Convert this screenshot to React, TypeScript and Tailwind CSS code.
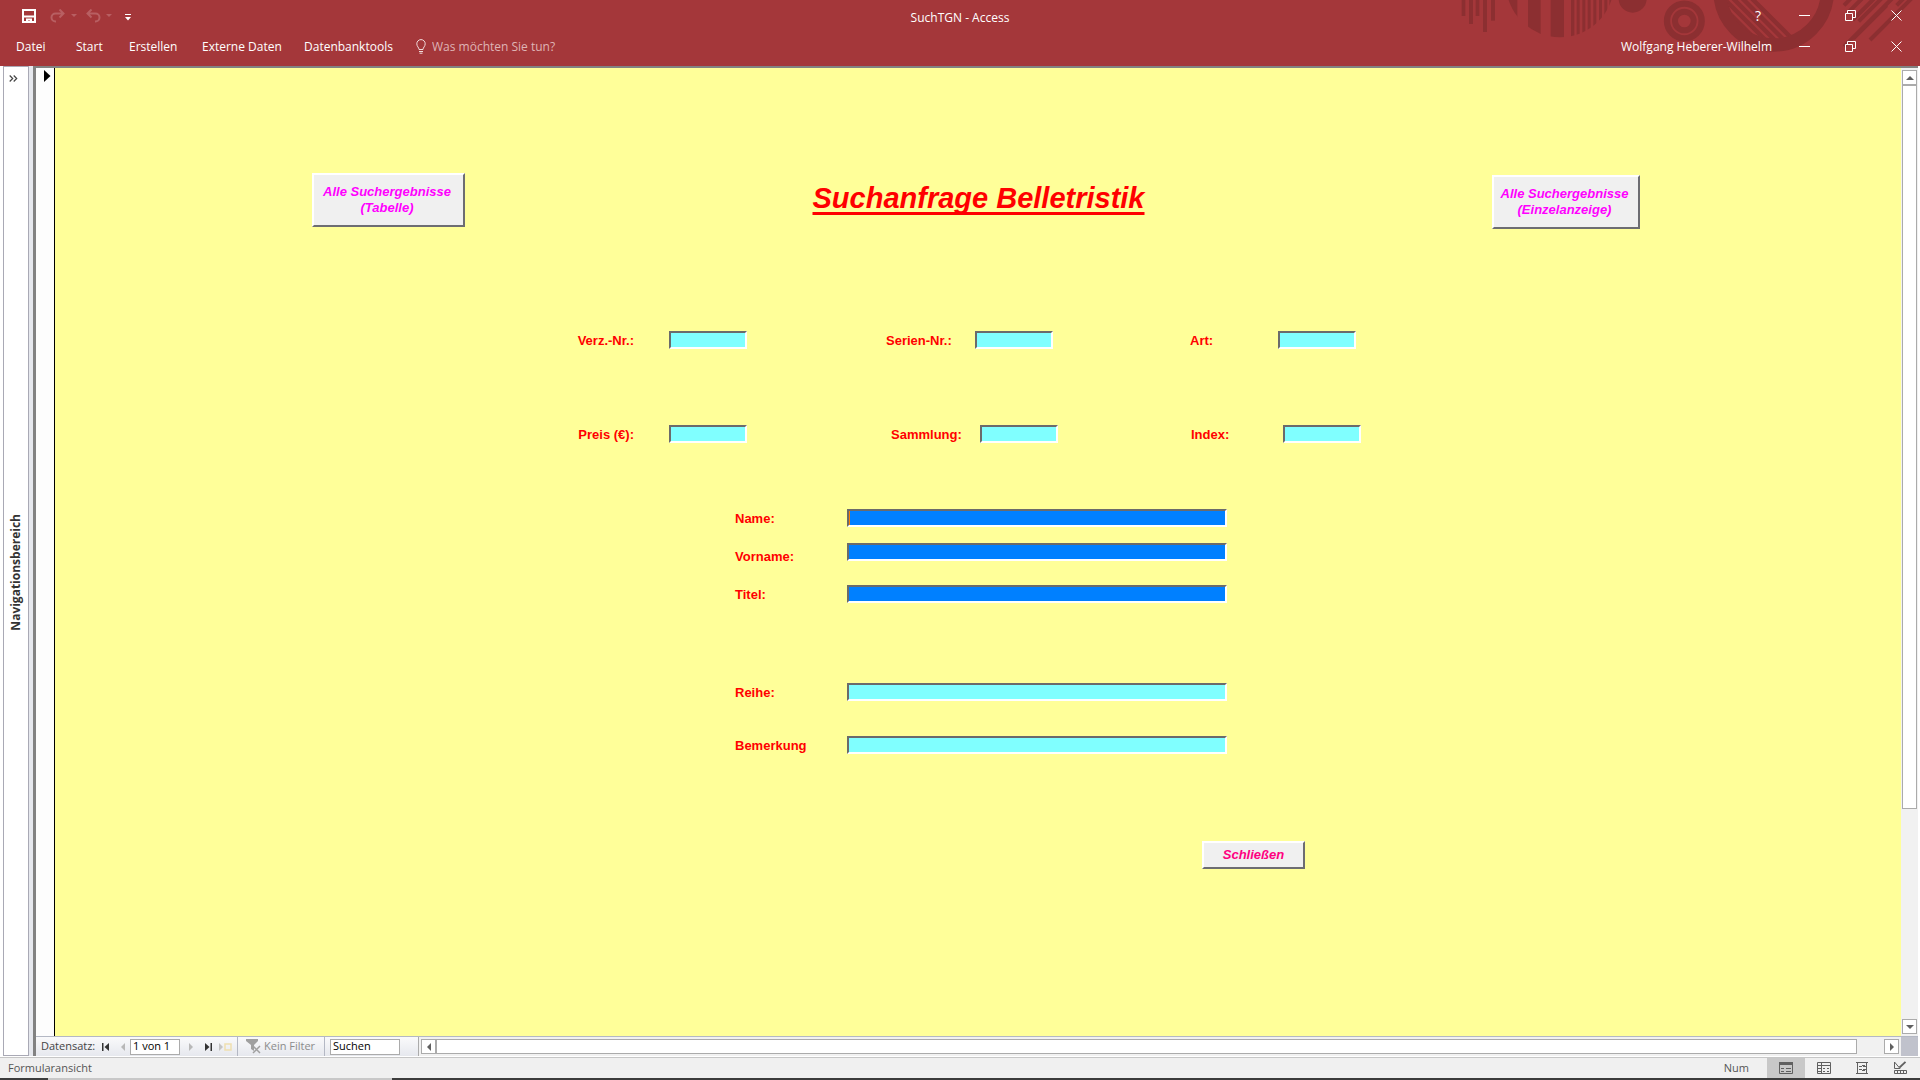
import React from "react";

const cyan = "bg-[#80ffff]";
const blue = "bg-[#0080ff]";

function Field({ id, color, wide }: { id: string; color: string; wide?: boolean }) {
  return (
    <input
      id={id}
      type="text"
      className={`h-[18px] rounded-none border-2 border-t-[#6b6b6b] border-l-[#6b6b6b] border-r-white border-b-white px-0.5 text-[13px] text-black outline-none ${color} ${wide ? "w-[380px]" : "w-[78px]"}`}
    />
  );
}

function Label({ id, text, right }: { id: string; text: string; right?: boolean }) {
  return (
    <label
      htmlFor={id}
      className={`pt-px text-[13px] leading-[18px] font-bold whitespace-nowrap text-[#ff0000] ${right ? "w-[61px] text-right" : ""}`}
    >
      {text}
    </label>
  );
}

function WideRow({ id, text, color, low }: { id: string; text: string; color: string; low?: boolean }) {
  return (
    <div className={`grid grid-cols-[112px_380px] ${low ? "h-[23px]" : "h-[18px]"}`}>
      <div className={`flex ${low ? "items-end" : "items-start"}`}>
        <Label id={id} text={text} />
      </div>
      <Field id={id} color={color} wide />
    </div>
  );
}

function FormButton({ children, className }: { children: React.ReactNode; className: string }) {
  return (
    <button
      type="button"
      className={`flex items-center justify-center border-2 border-t-white border-l-white border-r-[#6d6d72] border-b-[#6d6d72] bg-[#f0f0f0] text-center text-[13px] leading-4 font-bold italic ${className}`}
    >
      {children}
    </button>
  );
}

function HeaderArt() {
  return (
    <svg className="absolute top-0 right-0 h-[66px] w-[480px]" viewBox="0 0 1440 198" aria-hidden="true">
      <defs>
        <clipPath id="stripedDisc">
          <circle cx="360" cy="-50" r="162" />
        </clipPath>
        <clipPath id="ringHole">
          <circle cx="1001" cy="-26" r="142" />
        </clipPath>
      </defs>
      <g fill="#8c2f31">
        <rect x="65" y="0" width="11" height="48" />
        <rect x="87" y="0" width="12" height="72" />
        <rect x="107" y="0" width="11" height="48" />
        <rect x="129" y="0" width="12" height="96" />
        <rect x="153" y="0" width="12" height="62" />
        <g clipPath="url(#stripedDisc)">
          <rect x="190" y="0" width="42" height="120" />
          <rect x="264" y="0" width="38" height="120" />
          <rect x="332" y="0" width="40" height="120" />
          <rect x="393" y="0" width="10" height="120" />
          <rect x="410" y="0" width="9" height="120" />
          <rect x="427" y="0" width="9" height="120" />
          <rect x="443" y="0" width="9" height="120" />
          <rect x="460" y="0" width="9" height="120" />
          <rect x="477" y="0" width="9" height="120" />
          <rect x="493" y="0" width="9" height="120" />
          <rect x="508" y="0" width="9" height="120" />
        </g>
        <circle cx="578" cy="-4" r="42" />
      </g>
      <g fill="none" stroke="#8c2f31">
        <circle cx="733" cy="63" r="52" strokeWidth="19" />
        <circle cx="733" cy="63" r="28" strokeWidth="18" />
        <circle cx="1001" cy="-26" r="161" strokeWidth="40" />
        <g clipPath="url(#ringHole)" strokeWidth="13">
          <path d="M840 40L980 180M840 12L1000 172M848 -8L1020 164M872 -12L1040 156M900 -12L1060 148M928 -12L1080 140" />
        </g>
        <g strokeWidth="12">
          <path d="M1212 16L1232 -4M1224 38L1270 -8M1238 60L1306 -8M1256 64L1328 -8M1212 140L1362 -10M1240 116L1340 16M1290 120L1420 -10M1390 -4L1370 16" />
        </g>
      </g>
    </svg>
  );
}

function WindowControls() {
  const btn = "flex h-6 w-[46px] items-center justify-center";
  return (
    <div className="flex pr-px text-white">
      <button type="button" aria-label="Minimieren" className={btn}>
        <svg width="11" height="11" viewBox="0 0 11 11" stroke="currentColor"><path d="M0 5.5H11" /></svg>
      </button>
      <button type="button" aria-label="Wiederherstellen" className={btn}>
        <svg width="11" height="11" viewBox="0 0 11 11" fill="none" stroke="currentColor"><path d="M.5 3.5H7.5V10.500H.5ZM2.500 3.500V.5H10.500V7.500H7.500" /></svg>
      </button>
      <button type="button" aria-label="Schließen" className={btn}>
        <svg width="11" height="11" viewBox="0 0 11 11" stroke="currentColor"><path d="M.5 .5L10.500 10.500M10.500 .5L.5 10.500" /></svg>
      </button>
    </div>
  );
}

function Caret() {
  return (
    <svg width="6" height="4" viewBox="0 0 6 4" fill="#b85f62" aria-hidden="true"><path d="M0 0H6L3 3Z" /></svg>
  );
}

function Header() {
  return (
    <header className="relative flex h-[66px] shrink-0 flex-col overflow-hidden bg-[#a4373a] text-xs text-white">
      <HeaderArt />
      <div className="relative grid h-[31px] grid-cols-[1fr_auto_1fr] items-center">
        <div className="flex items-center pl-[22px]">
          <button type="button" aria-label="Speichern">
            <svg width="14" height="14" viewBox="0 0 14 14" fill="none" stroke="white" strokeWidth="2"><path d="M1 1H13V13H1ZM1 7.500H13" /><path d="M4 9.500H10V14H8V11.500H6V14H4Z" fill="white" stroke="none" /></svg>
          </button>
          <button type="button" aria-label="Wiederholen" className="ml-[14px] flex items-center gap-[6px]">
            <svg width="15" height="14" viewBox="0 0 15 14" fill="none" stroke="#b85f62" strokeWidth="2"><path d="M9.500 .5L13.500 4.500L9.500 8.500M13 4.500H5.500A4 4 0 0 0 5.500 12.500H6" /></svg>
            <Caret />
          </button>
          <button type="button" aria-label="Rückgängig" className="ml-[9px] flex items-center gap-[5px]">
            <svg width="15" height="14" viewBox="0 0 15 14" fill="none" stroke="#b85f62" strokeWidth="2"><path d="M5.500 .5L1.500 4.500L5.500 8.500M2 4.500H9.500A4 4 0 0 1 9.500 12.500H9" /></svg>
            <Caret />
          </button>
          <button type="button" aria-label="Symbolleiste anpassen" className="ml-[13px] pt-1">
            <svg width="6" height="7" viewBox="0 0 6 7" fill="white"><path d="M0 0H6V1H0ZM0 3H6L3 6.500Z" /></svg>
          </button>
        </div>
        <h1 className="pt-1 text-[12px]">SuchTGN - Access</h1>
        <div className="flex items-center justify-end">
          <button type="button" aria-label="Hilfe" className="mr-[17px] w-[12px] text-sm leading-4">?</button>
          <WindowControls />
        </div>
      </div>
      <div className="relative flex h-[31px] items-center">
        <nav className="flex items-center pl-4">
          <button type="button" className="w-[60px] text-left">Datei</button>
          <button type="button" className="w-[53px] text-left">Start</button>
          <button type="button" className="w-[73px] text-left">Erstellen</button>
          <button type="button" className="w-[102px] text-left whitespace-nowrap">Externe Daten</button>
          <button type="button" className="w-[112px] text-left">Datenbanktools</button>
        </nav>
        <label className="flex items-center gap-[6px]">
          <svg width="10" height="15" viewBox="0 0 10 15" fill="none" stroke="#f0dcdc" aria-hidden="true"><path d="M3 10.500C3 8.500 .8 7.500 .8 4.800A4.200 4.200 0 0 1 9.200 4.800C9.200 7.500 7 8.500 7 10.500ZM3 12.500H7M3.500 14.200H6.500" /></svg>
          <input type="text" placeholder="Was möchten Sie tun?" className="w-[160px] bg-transparent outline-none placeholder:text-[#dfb4b5]" />
        </label>
        <div className="ml-auto flex items-center">
          <span className="mr-[9px]">Wolfgang Heberer-Wilhelm</span>
          <WindowControls />
        </div>
      </div>
    </header>
  );
}

function Arrow({ d }: { d: string }) {
  return <svg width="8" height="8" viewBox="0 0 8 8" fill="#606060" aria-hidden="true"><path d={d} /></svg>;
}

const scrollBtn = "flex size-[15px] shrink-0 items-center justify-center border border-[#ababab] bg-white";

function SearchForm() {
  return (
    <form className="flex min-w-0 flex-1 flex-col bg-[#ffff99] pt-[105px] font-['Liberation_Sans',Arial,sans-serif]">
      <div className="flex items-start justify-between pr-[261px] pl-[257px]">
        <FormButton className="h-[54px] w-[153px] pr-[3px] text-[#ff00ff]">
          <span>Alle Suchergebnisse<br />(Tabelle)</span>
        </FormButton>
        <h2 className="pt-2 text-[29px] leading-[34px] font-bold whitespace-nowrap text-[#ff0000] italic underline decoration-[3px] underline-offset-4 [text-decoration-skip-ink:none]">
          Suchanfrage Belletristik
        </h2>
        <FormButton className="mt-[2px] h-[54px] w-[148px] pr-[3px] text-[#ff00ff]">
          <span>Alle Suchergebnisse<br />(Einzelanzeige)</span>
        </FormButton>
      </div>
      <div className="mx-auto mt-[102px] flex w-[810px] flex-col">
        <div className="grid grid-cols-[96px_217px_89px_215px_88px_78px]">
          <Label id="verz" text="Verz.-Nr.:" right />
          <Field id="verz" color={cyan} />
          <Label id="serie" text="Serien-Nr.:" />
          <Field id="serie" color={cyan} />
          <Label id="art" text="Art:" />
          <Field id="art" color={cyan} />
        </div>
        <div className="mt-[75px] grid grid-cols-[96px_222px_89px_211px_92px_78px]">
          <Label id="preis" text="Preis (€):" right />
          <Field id="preis" color={cyan} />
          <Label id="sammlung" text="Sammlung:" />
          <Field id="sammlung" color={cyan} />
          <Label id="index" text="Index:" />
          <Field id="index" color={cyan} />
        </div>
        <div className="mt-[65px] flex flex-col pl-[162px]">
          <div className="relative">
            <WideRow id="name" text="Name:" color={blue} />
            <span className="absolute top-[2px] left-[114px] h-[14px] w-px bg-[#ff8000]" />
          </div>
          <div className="mt-4"><WideRow id="vorname" text="Vorname:" color={blue} low /></div>
          <div className="mt-[19px]"><WideRow id="titel" text="Titel:" color={blue} /></div>
          <div className="mt-20"><WideRow id="reihe" text="Reihe:" color={cyan} /></div>
          <div className="mt-[35px]"><WideRow id="bemerkung" text="Bemerkung" color={cyan} /></div>
        </div>
        <FormButton className="mt-[87px] mr-[78px] h-7 w-[103px] self-end text-[#ff0080]">Schließen</FormButton>
      </div>
    </form>
  );
}

function RecordBar() {
  return (
    <div className="flex h-[20px] shrink-0 items-center border-t border-[#b4b8c4] bg-linear-to-b from-[#fafafb] to-[#e6e8ee] text-[#444444]">
      <span className="w-[60px] pl-[5px] text-[11px] whitespace-nowrap">Datensatz:</span>
      <div className="flex w-[34px] items-center gap-3 pl-[6px]">
        <button type="button" aria-label="Erster Datensatz">
          <svg width="7" height="8" viewBox="0 0 7 8" fill="#333"><path d="M0 0H1.500V8H0ZM7 0V8L2.500 4Z" /></svg>
        </button>
        <button type="button" aria-label="Vorheriger Datensatz">
          <svg width="4" height="8" viewBox="0 0 4 8" fill="#b8b8b8"><path d="M4 0V8L0 4Z" /></svg>
        </button>
      </div>
      <input type="text" aria-label="Aktueller Datensatz" defaultValue="1 von 1" className="h-4 w-[50px] shrink-0 border border-[#ababab] bg-white px-[2px] text-[11px] text-black outline-none" />
      <div className="flex h-full w-[58px] shrink-0 items-center border-r border-[#b4b8c4] pl-[9px]">
        <button type="button" aria-label="Nächster Datensatz">
          <svg width="4" height="8" viewBox="0 0 4 8" fill="#b8b8b8"><path d="M0 0V8L4 4Z" /></svg>
        </button>
        <button type="button" aria-label="Letzter Datensatz" className="ml-3">
          <svg width="7" height="8" viewBox="0 0 7 8" fill="#333"><path d="M5.500 0H7V8H5.500ZM0 0V8L4.500 4Z" /></svg>
        </button>
        <button type="button" aria-label="Neuer Datensatz" className="ml-[7px]">
          <svg width="13" height="8" viewBox="0 0 13 8" fill="#c4c4c4"><path d="M0 0V8L4 4Z" /><path d="M6 1H12V7H6Z" fill="none" stroke="#f0dfb0" strokeWidth="1.500" /></svg>
        </button>
      </div>
      <button type="button" className="flex h-full w-[87px] shrink-0 items-center gap-[2px] border-r border-[#b4b8c4] pl-2 text-[11px] whitespace-nowrap text-[#8c8c8c]">
        <svg width="16" height="15" viewBox="0 0 16 15" fill="#a0a0a0"><path d="M0 0H12V2L8 6V12L5 10V6L0 2Z" /><path d="M7 7L14 14M14 7L7 14" stroke="#a0a0a0" strokeWidth="1.500" /></svg>
        Kein Filter
      </button>
      <input type="text" aria-label="Suchen" defaultValue="Suchen" className="ml-[5px] h-4 w-[70px] shrink-0 border border-[#ababab] bg-white px-[2px] text-[11px] text-black outline-none" />
      <div className="ml-[18px] flex h-full flex-1 items-center border-l border-[#ababab] bg-[#f1f1f1] pr-[2px] pl-[2px]">
        <button type="button" aria-label="Nach links" className={scrollBtn}><Arrow d="M6 0V8L2 4Z" /></button>
        <div className="flex-1 pr-[27px]"><div className="h-[15px] border border-[#ababab] bg-white" /></div>
        <button type="button" aria-label="Nach rechts" className={scrollBtn}><Arrow d="M2 0V8L6 4Z" /></button>
      </div>
      <div className="h-full w-[17px] bg-[#c0c2cc]" />
    </div>
  );
}

function StatusBar() {
  const cell = "flex h-full w-[38px] items-center justify-center";
  return (
    <footer className="flex h-[21px] shrink-0 items-center border-t border-[#c6c6c6] bg-[#f0f0f0] pr-px text-[11px] text-[#555555]">
      <span className="pl-2">Formularansicht</span>
      <span className="mr-[18px] ml-auto">Num</span>
      <button type="button" aria-label="Formularansicht" className={`${cell} bg-[#c8c8c8]`}>
        <svg width="14" height="12" viewBox="0 0 14 12" fill="none" stroke="#606060"><path d="M.5 .5H13.500V11.500H.5Z" /><path d="M0 1.500H14" strokeWidth="3" /><path d="M2 6.500H5M2 9.500H5M7 6.500H12M7 9.500H12" /></svg>
      </button>
      <button type="button" aria-label="Datenblattansicht" className={cell}>
        <svg width="14" height="12" viewBox="0 0 14 12" fill="none" stroke="#606060"><path d="M.5 .5H13.500V11.500H.5ZM4.500 0V12M0 3.500H14" /><path d="M6 6.500H8M10 6.500H12M6 9.500H8M10 9.500H12M1 6.500H4M1 9.500H4" /></svg>
      </button>
      <button type="button" aria-label="Layoutansicht" className={cell}>
        <svg width="12" height="12" viewBox="0 0 12 12" fill="none" stroke="#606060"><path d="M0 .5H12M0 11.500H12M1.500 0V12M10.500 0V12M3 4.500H6M7 4.500H10M3 7.500H6M7 7.500H10M6 3.500H9M6 8.500H9" /></svg>
      </button>
      <button type="button" aria-label="Entwurfsansicht" className={cell}>
        <svg width="14" height="14" viewBox="0 0 14 14" fill="none" stroke="#606060"><path d="M1.500 1V7.500H7ZM1.500 9.500H13.500V12.500H1.500ZM4.500 10V12M7.500 10V12M10.500 10V12" /><path d="M6.500 6.500L12.500 .8" strokeWidth="1.800" /></svg>
      </button>
    </footer>
  );
}

export default function App() {
  return (
    <div className="flex h-screen w-full flex-col overflow-hidden bg-[#f0f0f0] font-['Open_Sans','Noto_Sans',sans-serif]">
      <Header />
      <main className="flex min-h-0 flex-1 bg-white pr-[2px] pb-px">
        <aside className="ml-[3px] flex w-[26px] shrink-0 flex-col items-center border border-[#a9a9b5] bg-white">
          <button type="button" aria-label="Navigationsbereich öffnen" className="mt-2 ml-[5px] self-start">
            <svg width="9" height="7" viewBox="0 0 9 7" fill="none" stroke="#444"><path d="M.7 .5L3.700 3.500L.7 6.500M4.700 .5L7.700 3.500L4.700 6.500" strokeWidth="1.200" /></svg>
          </button>
          <div className="flex flex-1 items-center justify-center pt-2">
            <span className="rotate-180 text-[12px] font-bold text-[#333333] [writing-mode:vertical-rl]">Navigationsbereich</span>
          </div>
        </aside>
        <div className="w-1 shrink-0 bg-[#e6e8ee]" />
        <div className="flex min-w-0 flex-1 flex-col border-t-2 border-l-[3px] border-[#828282]">
          <div className="flex min-h-0 flex-1">
            <div className="w-[19px] shrink-0 border-r border-black bg-[#fdfdfd] pt-[2px] pl-2">
              <svg width="7" height="12" viewBox="0 0 7 12" aria-hidden="true"><path d="M0 0V12L6.500 6Z" /></svg>
            </div>
            <SearchForm />
            <div className="flex w-[17px] shrink-0 flex-col items-center bg-[#f1f1f1] py-[2px]">
              <button type="button" aria-label="Nach oben" className={scrollBtn}><Arrow d="M0 6H8L4 2Z" /></button>
              <div className="flex min-h-0 w-[15px] flex-1 flex-col">
                <div className="h-31/40 border border-[#ababab] bg-white" />
              </div>
              <button type="button" aria-label="Nach unten" className={scrollBtn}><Arrow d="M0 2H8L4 6Z" /></button>
            </div>
          </div>
          <RecordBar />
        </div>
      </main>
      <StatusBar />
      <div className="flex h-[2px] shrink-0 bg-[#3c3c3c]">
        <div className="ml-12 h-full w-[344px] bg-[#c8c8c8]" />
      </div>
    </div>
  );
}
